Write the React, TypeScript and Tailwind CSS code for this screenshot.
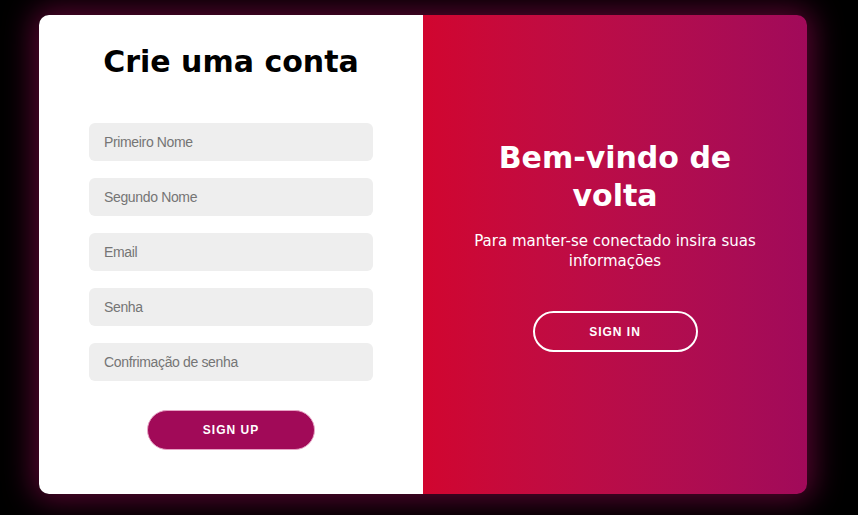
import type { ReactNode } from "react"

const head = { fontFamily: '"DejaVu Sans", "Noto Sans", sans-serif' }
const body = { fontFamily: '"Liberation Sans", Arial, sans-serif' }

const Field = ({ placeholder }: { placeholder: string }) => (
    <input
        placeholder={placeholder}
        className="w-[284px] h-[38px] rounded-md bg-[#eeeeee] px-[15px] text-[14px] tracking-[-0.35px] text-[#333] placeholder:text-[#757575] outline-none"
        style={body}
    />
)

const Pill = ({ children, styles }: { children: ReactNode; styles: string }) => (
    <button
        className={`rounded-full text-white text-[12px] font-bold tracking-[1px] uppercase ${styles}`}
        style={body}
    >
        {children}
    </button>
)

export default function App() {
    return (
        <div className="w-[858px] h-[515px] bg-black flex pl-[39px] pt-[15px]">
            <div className="w-[768px] h-[479px] rounded-[10px] overflow-hidden flex shadow-[0_0_30px_6px_rgba(161,10,88,0.55)]">
                {/* Cadastro */}
                <div className="w-[384px] bg-white flex flex-col items-center">
                    <h1 className="text-[30px] font-bold text-black mt-[29px] leading-[36px]" style={head}>
                        Crie uma conta
                    </h1>
                    <div className="flex flex-col gap-[17px] mt-[43px]">
                        <Field placeholder="Primeiro Nome" />
                        <Field placeholder="Segundo Nome" />
                        <Field placeholder="Email" />
                        <Field placeholder="Senha" />
                        <Field placeholder="Confrimação de senha" />
                    </div>
                    <Pill styles="mt-[29px] w-[168px] h-[40px] bg-[#a10a58] border border-[#e6a3c4]">
                        Sign Up
                    </Pill>
                </div>
                {/* Login */}
                <div className="w-[384px] bg-gradient-to-r from-[#d1052f] to-[#a10a5a] flex flex-col items-center text-white">
                    <h1 className="text-[30px] font-bold leading-[38px] text-center mt-[124px] w-[260px]" style={head}>
                        Bem-vindo de volta
                    </h1>
                    <p className="text-[15px] leading-[20px] text-center mt-[16px] w-[300px]" style={head}>
                        Para manter-se conectado insira suas informações
                    </p>
                    <Pill styles="mt-[40px] w-[165px] h-[41px] border-2 border-white">
                        Sign In
                    </Pill>
                </div>
            </div>
        </div>
    )
}
